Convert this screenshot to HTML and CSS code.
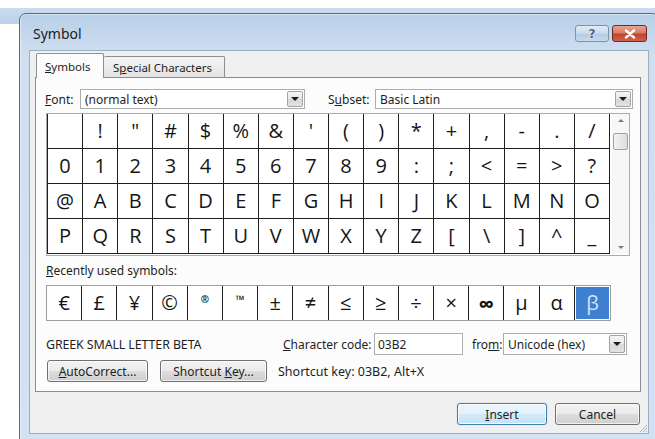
FILE: index.html
```html
<!DOCTYPE html>
<html lang="en">
<head>
<meta charset="utf-8">
<title>Symbol</title>
<link rel="stylesheet" href="styles.css">
</head>
<body>
<div class="dialog">
  <div class="titlebar">
    <span class="title">Symbol</span>
    <div class="caption-btns">
      <span class="cbtn help">?</span>
      <span class="cbtn close">
        <svg width="12" height="10" viewBox="0 0 12 10"><path d="M2 1.5 L10 8.5 M10 1.5 L2 8.5" stroke="#fff" stroke-width="2.4" stroke-linecap="round"/></svg>
      </span>
    </div>
  </div>

  <div class="client">
    <div class="tabs">
      <div class="tab active"><span><u>S</u>ymbols</span></div>
      <div class="tab"><span>S<u>p</u>ecial Characters</span></div>
    </div>

    <div class="panel">
      <div class="font-row">
        <span class="lbl lbl-font"><u>F</u>ont:</span>
        <div class="combo combo-font"><span class="combo-text">(normal text)</span><span class="drop"></span></div>
        <span class="lbl lbl-subset">S<u>u</u>bset:</span>
        <div class="combo combo-subset"><span class="combo-text">Basic Latin</span><span class="drop"></span></div>
      </div>

      <div class="charmap">
        <div class="cells">
          <span></span><span>!</span><span>"</span><span>#</span><span>$</span><span>%</span><span>&amp;</span><span>'</span><span>(</span><span>)</span><span>*</span><span>+</span><span>,</span><span>-</span><span>.</span><span>/</span>
          <span>0</span><span>1</span><span>2</span><span>3</span><span>4</span><span>5</span><span>6</span><span>7</span><span>8</span><span>9</span><span>:</span><span>;</span><span>&lt;</span><span>=</span><span>&gt;</span><span>?</span>
          <span>@</span><span>A</span><span>B</span><span>C</span><span>D</span><span>E</span><span>F</span><span>G</span><span>H</span><span>I</span><span>J</span><span>K</span><span>L</span><span>M</span><span>N</span><span>O</span>
          <span>P</span><span>Q</span><span>R</span><span>S</span><span>T</span><span>U</span><span>V</span><span>W</span><span>X</span><span>Y</span><span>Z</span><span>[</span><span>\</span><span>]</span><span>^</span><span>_</span>
        </div>
        <div class="vscroll">
          <span class="sb-btn"><i class="tri-up"></i></span>
          <span class="sb-thumb"></span>
          <span class="sb-fill"></span>
          <span class="sb-btn"><i class="tri-down"></i></span>
        </div>
      </div>

      <div class="lbl lbl-recent"><u>R</u>ecently used symbols:</div>
      <div class="recent">
        <span>€</span><span>£</span><span>¥</span><span>©</span><span class="tiny">®</span><span class="tiny tm">™</span><span>±</span><span>≠</span>
        <span>≤</span><span>≥</span><span>÷</span><span>×</span><span class="inf">∞</span><span>µ</span><span>α</span><span class="sel">β</span>
      </div>

      <div class="info-row">
        <span class="charname">GREEK SMALL LETTER BETA</span>
        <span class="lbl lbl-code"><u>C</u>haracter code:</span>
        <div class="field field-code">03B2</div>
        <span class="lbl lbl-from">fro<u>m</u>:</span>
        <div class="combo combo-from"><span class="combo-text">Unicode (hex)</span><span class="drop"></span></div>
      </div>

      <div class="btn-row">
        <span class="btn btn-auto"><span><u>A</u>utoCorrect...</span></span>
        <span class="btn btn-key"><span>Shortcut <u>K</u>ey...</span></span>
        <span class="shortcut">Shortcut key: 03B2, Alt+X</span>
      </div>
    </div>

    <div class="footer">
      <span class="btn btn-insert"><span><u>I</u>nsert</span></span>
      <span class="btn btn-cancel"><span>Cancel</span></span>
    </div>

    <svg class="grip" width="10" height="10" viewBox="0 0 10 10">
      <path d="M9 2 L2 9 M9 5 L5 9 M9 8 L8 9" stroke="#a9b4c0" stroke-width="1"/>
    </svg>
  </div>
</div>
</body>
</html>
```

FILE: styles.css
```css
* {
  box-sizing: border-box;
}

html, body {
  margin: 0;
  width: 655px;
  height: 439px;
  overflow: hidden;
}

body {
  /* desktop with another window's edge peeking out behind the dialog */
  background: linear-gradient(to bottom, #ffffff 0 8px, #c9dbee 8px, #bcd2ea 24px, #ffffff 24px);
  font-family: "Noto Sans", "Open Sans", sans-serif;
  font-size: 12px;
  color: #1e1e1e;
}

u {
  text-decoration: underline;
  text-underline-offset: 1px;
}

/* ---------- window frame ---------- */
.dialog {
  margin: 13px 0 0 19px;
  width: 640px;
  height: 440px;
  border: 1px solid #56687d;
  border-radius: 7px 7px 0 0;
  background: linear-gradient(to bottom, #b7cfe8 0, #cfdff0 40px, #d3e2f2 100%);
  box-shadow: inset 0 0 0 1px rgba(255, 255, 255, 0.45);
}

.titlebar {
  height: 36px;
  display: flex;
  align-items: center;
  justify-content: space-between;
  padding: 0 11px 0 13px;
}

.title {
  font-size: 14px;
  color: #1c1c1c;
  margin-top: 3px;
}

.caption-btns {
  display: flex;
  gap: 3px;
  margin-top: 3px;
}

.cbtn {
  height: 17px;
  border-radius: 3px;
  display: flex;
  align-items: center;
  justify-content: center;
}

.cbtn.help {
  width: 34px;
  border: 1px solid #7d92ab;
  background: linear-gradient(to bottom, #e3ecf6 0, #c9d9ea 50%, #b5c9df 51%, #c8dbee 100%);
  color: #4e6683;
  font-family: "DejaVu Sans", sans-serif;
  font-weight: bold;
  font-size: 12px;
  text-shadow: 0 0 2px #fff;
}

.cbtn.close {
  width: 35px;
  border: 1px solid #6b2a22;
  background: linear-gradient(to bottom, #e8a696 0, #d57d68 45%, #c2432c 55%, #d0634a 100%);
}

/* ---------- client area ---------- */
.client {
  position: relative;
  margin-left: 9px;
  width: 620px;
  height: 384px;
  border: 1px solid #9aaec5;
  background: #f0f0f0;
}

.tabs {
  display: flex;
  align-items: flex-end;
  height: 26px;
  padding: 2px 0 0 6px;
}

.tab {
  height: 21px;
  padding: 0 9px;
  display: flex;
  align-items: center;
  border: 1px solid #8e8f8f;
  border-bottom: none;
  background: linear-gradient(to bottom, #f4f4f4, #e3e3e3);
  font-size: 11.5px;
  border-radius: 2px 2px 0 0;
  white-space: nowrap;
}

.tab.active {
  position: relative;
  z-index: 1;
  height: 25px;
  margin-bottom: -1px;
  width: 68px;
  padding: 0 0 0 8px;
  background: #fcfcfc;
}

.tab + .tab {
  border-left: none;
  width: 121px;
}

.panel {
  margin-left: 5px;
  width: 606px;
  height: 315px;
  border: 1px solid #898c95;
  background: #fcfcfc;
  padding: 11px 0 0 9px;
}

.lbl {
  font-size: 12px;
  white-space: nowrap;
}

/* ---------- font / subset row ---------- */
.font-row {
  display: flex;
  align-items: center;
  height: 20px;
}

.lbl-font {
  width: 35px;
}

.lbl-subset {
  width: 47px;
  margin-left: 23px;
}

.combo {
  position: relative;
  height: 20px;
  border: 1px solid #abadb3;
  background: #fff;
  display: flex;
  align-items: center;
  padding-left: 4px;
  font-size: 12px;
  white-space: nowrap;
}

.combo-font {
  width: 225px;
}

.combo-subset {
  width: 258px;
}

.drop {
  position: absolute;
  top: 1px;
  right: 1px;
  bottom: 1px;
  width: 16px;
  border: 1px solid #a3a3a3;
  border-radius: 2px;
  background: linear-gradient(to bottom, #f6f6f6 0, #e6e6e6 50%, #d8d8d8 51%, #e2e2e2 100%);
}

.drop::after {
  content: "";
  position: absolute;
  left: 50%;
  top: 50%;
  margin: -2px 0 0 -4px;
  border-left: 4px solid transparent;
  border-right: 4px solid transparent;
  border-top: 4px solid #1b1b1b;
}

/* ---------- character map ---------- */
.charmap {
  display: flex;
  margin: 4px 0 0 1px;
  width: 584px;
  height: 143px;
  border: 1px solid #a9abb0;
  background: #fff;
  padding-bottom: 1px;
}

.cells {
  width: 563px;
  display: grid;
  grid-template-columns: repeat(16, 1fr);
  grid-template-rows: repeat(4, 35px);
  border-left: 1px solid #1e1e1e;
}

.cells span,
.recent span {
  display: flex;
  align-items: center;
  justify-content: center;
  font-family: "Open Sans", "Noto Sans", sans-serif;
  font-size: 20px;
  font-weight: 500;
  color: #151515;
  line-height: 1;
}

.cells span {
  border-right: 1px solid #1e1e1e;
  border-bottom: 1px solid #1e1e1e;
}

.vscroll {
  width: 17px;
  margin-left: 2px;
  display: flex;
  flex-direction: column;
  background: #f7f7f7;
}

.sb-btn {
  height: 17px;
  display: flex;
  align-items: center;
  justify-content: center;
}

.tri-up,
.tri-down {
  width: 0;
  height: 0;
  border-left: 3px solid transparent;
  border-right: 3px solid transparent;
}

.tri-up {
  border-bottom: 3px solid #7b7b7b;
  margin-top: -4px;
}

.tri-down {
  border-top: 3px solid #7b7b7b;
  margin-top: 4px;
}

.sb-thumb {
  height: 17px;
  margin: 2px 1px 0;
  border: 1px solid #a2a2a2;
  border-radius: 2px;
  background: linear-gradient(to right, #f2f2f2, #dedede);
}

.sb-fill {
  flex: 1;
}

/* ---------- recently used ---------- */
.lbl-recent {
  margin-top: 7px;
  line-height: 15px;
  margin-left: 1px;
}

.recent {
  display: grid;
  grid-template-columns: repeat(16, 1fr);
  margin: 7px 0 0 1px;
  width: 565px;
  height: 36px;
  border: 1px solid #a0a0a0;
  background: #fff;
}

.recent span {
  border-right: 1px solid #1e1e1e;
}

.recent span:last-child {
  border-right: none;
}

.recent .tiny {
  font-size: 10px;
  font-weight: 700;
  align-items: flex-start;
  padding-top: 8px;
}

.recent .tm {
  font-size: 12px;
}

.recent .inf {
  font-size: 22px;
  font-weight: bold;
}

.recent .sel {
  background: #3f7fd0;
  color: #d3e6fb;
  font-weight: 400;
  margin: 1px;
}

/* ---------- info rows ---------- */
.info-row {
  display: flex;
  align-items: center;
  height: 22px;
  margin-top: 12px;
  margin-left: 1px;
}

.charname {
  width: 237px;
  font-size: 12.4px;
  letter-spacing: -0.1px;
  white-space: nowrap;
}

.lbl-code {
  width: 91px;
}

.field {
  height: 22px;
  border: 1px solid #abadb3;
  background: #fff;
  display: flex;
  align-items: center;
  padding-left: 3px;
  font-size: 12px;
}

.field-code {
  width: 89px;
}

.lbl-from {
  width: 40px;
  padding-left: 9px;
}

.combo-from {
  width: 124px;
  height: 22px;
}

.btn-row {
  display: flex;
  align-items: center;
  height: 22px;
  margin-top: 5px;
}

.btn {
  height: 22px;
  display: flex;
  align-items: center;
  justify-content: center;
  border: 1px solid #707070;
  border-radius: 3px;
  background: linear-gradient(to bottom, #f2f2f2 0, #ebebeb 50%, #dddddd 51%, #cfcfcf 100%);
  box-shadow: inset 0 0 0 1px rgba(255, 255, 255, 0.7);
  font-size: 12px;
  white-space: nowrap;
}

.btn-auto {
  width: 101px;
  margin-left: 2px;
}

.btn-key {
  width: 107px;
  margin-left: 12px;
}

.shortcut {
  margin-left: 11px;
  font-size: 12.5px;
  white-space: nowrap;
}

/* ---------- dialog buttons ---------- */
.footer {
  display: flex;
  justify-content: flex-end;
  gap: 8px;
  margin-top: 11px;
  padding-right: 8px;
}

.btn-insert {
  width: 90px;
  border-color: #3c7fb1;
  background: linear-gradient(to bottom, #eaf6fd 0, #e1f1fb 50%, #d2e9f7 51%, #c6e2f5 100%);
  box-shadow: inset 0 0 0 1px rgba(255, 255, 255, 0.8), 0 0 1px #7fb6e0;
}

.btn-cancel {
  width: 85px;
}

.grip {
  position: absolute;
  right: 0;
  bottom: 0;
}
```
